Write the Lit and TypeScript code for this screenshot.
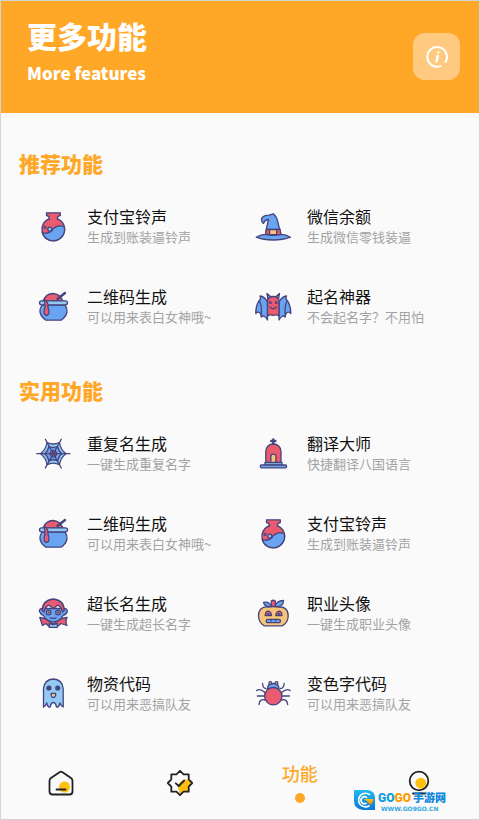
import { LitElement, html, css, svg } from "lit";
import { customElement } from "lit/decorators.js";

const potion = svg`
  <circle class="r" cx="18.3" cy="20.3" r="11.3"/>
  <path class="r" d="M14.5 10.5Q14.5 7 11.5 6.5V3.8H25.3V6.5Q22.2 7 22.2 10.5"/>
  <path class="b" d="M7.2 23.5Q13 25.5 16.5 22Q21 15 29.2 17.5A11.3 11.3 0 0 1 7.2 23.5Z"/>
  <path class="rn" d="M15.2 9.5H21.6V12H15.2Z"/>
  <circle class="l" cx="14.8" cy="20.2" r="2"/><circle class="l" cx="10" cy="18.3" r="1"/>`;
const cauldron = svg`
  <path class="b" d="M7 16Q4.5 20 5 23Q6 28 11 31.2H26Q31 28 32 23Q32.3 19 30 16Z"/>
  <path class="r" d="M8 12Q11 4.5 18 4.5Q25 5 28 12Z"/>
  <path class="o thick" d="M30 4L22.5 10"/>
  <rect class="l" x="4.5" y="11.8" width="28" height="4" rx="2"/>
  <path class="r" d="M9.5 10.5Q13.5 12.5 13 18Q15.5 26 11.5 26.5Q7.5 26 10 18Q10 15 9.5 10.5Z"/>`;
const hat = svg`
  <path class="b" d="M1.2 28.2Q6 25.5 10.5 25.3L11.5 19L13.5 10.5Q10 10.5 8.5 14.5Q5.8 12 6.8 9Q9 6.3 14 6.2L18.3 4.8Q22 8 22.8 13L25.8 25.3Q31 25.5 35.5 28.2Q28 31 18.3 31Q8 31 1.2 28.2Z"/>
  <path class="r" d="M11.4 20Q18 21.5 25 20L26 25.5Q18 27 10.6 25.5Z"/>
  <rect class="y" x="14.5" y="20.5" width="7.2" height="5.2"/>`;
const bat = svg`
  <path class="b" d="M12.5 13Q9.5 7.5 5 7Q6.5 10 3.5 12.5Q.5 18 .8 24.5Q3 22 5 24Q6 25 6.3 28Q9.2 25 12.5 31Z"/>
  <path class="b" d="M24 13Q27 7.5 31.5 7Q30 10 33 12.5Q36 18 35.8 24.5Q33.5 22 31.5 24Q30.5 25 30.2 28Q27.3 25 24 31Z"/>
  <path class="o" d="M4.5 12Q7 17 6.3 26M32 12Q29.5 17 30.2 26"/>
  <path class="b" d="M13 10.5L12 4.5L16 8ZM23.5 10.5L24.5 4.5L20.5 8Z"/>
  <path class="r" d="M12.5 27V12Q13 7.5 18.3 7.5Q23.5 7.5 24 12V27Q21.2 25 18.3 26.5Q15 25 12.5 27Z"/>
  <path class="o" d="M14.8 18Q18.3 21.5 21.5 18"/>
  <circle class="d" cx="15.4" cy="13.7" r="1.4"/><circle class="d" cx="21.2" cy="13.7" r="1.4"/>`;
const web = svg`
  <path class="l" d="M12 6.5Q18.3 9.5 24.5 6.5Q25.5 13.5 31 17.7Q25.5 21.5 24.5 28.7Q18.3 25.5 12 28.7Q11 21.5 5.5 17.7Q11 13.5 12 6.5Z"/>
  <path class="b" d="M14 10.5Q18.3 12.5 22.5 10.5Q23.5 15 26.8 17.7Q23.5 20.5 22.5 25Q18.3 22.5 14 25Q13 20.5 9.8 17.7Q13 15 14 10.5Z"/>
  <path class="r" d="M16.5 14.7H20L21.8 17.7L20 20.8H16.5L14.8 17.7Z"/>
  <path class="o" d="M1.8 17.7H34.8M10.3 3.2L26.3 32M26.3 3.2L10.3 32"/>`;
const tomb = svg`
  <path class="o thick" d="M18.3 3.5V8M16.3 5H20.3"/>
  <path class="r" d="M10.8 28.5V15.5Q11.5 8.2 18.3 8Q25.3 8.2 26 15.5V28.5Z"/>
  <path class="y" d="M15.8 26.7V20Q16 18.2 18.3 18.2Q20.7 18.2 20.9 20V26.7Z"/>
  <rect class="l" x="10" y="26.5" width="17" height="2.7"/>
  <rect class="b" x="5.3" y="29" width="26.3" height="2.8" rx="1.2"/>`;
const vampire = svg`
  <path class="r" d="M4.8 21.5L10 22.5L18.3 28L26.5 22.5L32 21.5Q30 26 32 29.5L26 27.5L23 30H13.5L11 27.5L7.5 29.5Z"/>
  <path class="b" d="M8 12.5Q3.7 12.5 4.5 15.5Q5.5 18.5 8.5 19.5Q11.5 25.5 18.3 26Q25 25.5 28 19.5Q31.5 18.5 32.3 15.5Q32.5 12.5 28.7 12.5Z"/>
  <path class="r" d="M7.3 14.5Q7 4.5 18.3 3Q29.5 4.5 29.2 14.5L27.5 16Q26.5 10.5 22.5 9.2L18.3 12.5L14 9.2Q10 10.5 9 16Z"/>
  <circle class="g" cx="13.6" cy="16.5" r="2.3"/><circle class="g" cx="23" cy="16.5" r="2.3"/>
  <circle class="d" cx="13.6" cy="16.5" r="1"/><circle class="d" cx="23" cy="16.5" r="1"/>
  <path class="o" d="M15.5 21.8Q18.3 23 21 21.8"/>
  <path class="l" d="M14.3 27.5L18.3 28.5L22.3 27.5V31.3H14.3Z"/>`;
const pumpkin = svg`
  <path class="y" d="M13 11Q3.5 10.5 3.5 20Q3.8 27 9.5 29.8H27Q33 27 33.2 20Q33 10.5 24 11Q18.3 9.5 13 11Z"/>
  <path class="b" d="M16.5 10.5Q10 11.5 8.5 6.5Q14 5 16.5 10.5ZM20 10.5Q21 5 28.5 4.5Q28.5 11.5 20 10.5Z"/>
  <path class="r" d="M16.3 10.5V5Q18.3 3.5 20.3 5V10.5Z"/>
  <path class="r" d="M10.2 19.5Q10.5 15.2 13.3 15.2Q16 15.5 16.5 19.5ZM20.8 19.5Q21.3 15.5 24 15.2Q27 15.5 27 19.5Z"/>
  <path class="d" d="M12.3 17.2H14.5V18.8H12.3ZM22.8 17.2H25V18.8H22.8Z"/>
  <rect class="b" x="11.3" y="23.3" width="14" height="3.3" rx="1.2"/>
  <path class="o" d="M16 23.3V25M20.6 23.3V25"/>`;
const ghost = svg`
  <path class="l" d="M8.5 31V12.5Q9.5 3.5 18.3 3Q27.3 3.5 28.2 12.5V31Q26 30 25 27Q23.5 32 21.5 31Q20.5 26.5 18.3 26.5Q16 26.5 15.3 31Q13 32 11.8 27Q10.5 30.5 8.5 31Z"/>
  <circle class="d" cx="14" cy="12" r="2.6"/><circle class="d" cx="22.7" cy="12" r="2.6"/>
  <path class="y" d="M16.2 17.3H20.6V19.5Q20 21.5 18.3 21.5Q16.5 21.5 16.2 19.5Z"/>`;
const spider = svg`
  <path class="o" d="M11 12.5Q8 12.5 7.5 7.5M25.5 12.5Q28.7 12.5 29.2 7.5M10 16.5Q5 12 1.5 14.5M26.7 16.5Q31.7 12 35.2 14.5M9 20H2.3M27.7 20H34.5M10 24Q4.5 22.5 4 28.5M26.7 24Q32 22.5 32.7 28.5"/>
  <path class="b" d="M12.5 13Q12.5 7.5 18.3 7.5Q24 7.5 24 13Z"/>
  <circle class="r" cx="18.3" cy="20.2" r="8.7"/>
  <circle class="y" cx="15.3" cy="7" r="1.4"/><circle class="y" cx="21.5" cy="7" r="1.4"/>`;

const sections = [
  {
    title: "推荐功能",
    items: [
      { icon: potion, name: "支付宝铃声", note: "生成到账装逼铃声" },
      { icon: hat, name: "微信余额", note: "生成微信零钱装逼" },
      { icon: cauldron, name: "二维码生成", note: "可以用来表白女神哦~" },
      { icon: bat, name: "起名神器", note: "不会起名字？不用怕" },
    ],
  },
  {
    title: "实用功能",
    items: [
      { icon: web, name: "重复名生成", note: "一键生成重复名字" },
      { icon: tomb, name: "翻译大师", note: "快捷翻译八国语言" },
      { icon: cauldron, name: "二维码生成", note: "可以用来表白女神哦~" },
      { icon: potion, name: "支付宝铃声", note: "生成到账装逼铃声" },
      { icon: vampire, name: "超长名生成", note: "一键生成超长名字" },
      { icon: pumpkin, name: "职业头像", note: "一键生成职业头像" },
      { icon: ghost, name: "物资代码", note: "可以用来恶搞队友" },
      { icon: spider, name: "变色字代码", note: "可以用来恶搞队友" },
    ],
  },
];

@customElement("app-root")
export class AppRoot extends LitElement {
  static styles = css`
    :host {
      display: flex;
      flex-direction: column;
      box-sizing: border-box;
      min-height: 100vh;
      border: 1px solid #d4d4d4;
      background: #fafafa;
      color: #111;
      font-family: "Noto Sans CJK SC", sans-serif;
    }
    h1, h2, p { margin: 0; }
    button {
      padding: 0;
      border: 0;
      background: none;
      color: inherit;
      font: inherit;
      text-align: left;
      cursor: pointer;
    }
    header {
      display: flex;
      justify-content: space-between;
      align-items: center;
      padding: 12px 19px 13px 26px;
      background: #ffa827;
      color: #fff;
    }
    .heading { padding-bottom: 11px; }
    h1 { font-size: 30px; line-height: 44px; font-weight: 900; }
    .subtitle {
      font-size: 17px;
      line-height: 32px;
      font-weight: 900;
    }
    .info {
      display: grid;
      place-items: center;
      width: 47px;
      height: 47px;
      border-radius: 12px;
      background: #ffca80;
    }
    main { flex: 1; padding: 34px 4px 0 18px; }
    section + section { margin-top: 45px; }
    h2 {
      color: #ffa827;
      font-size: 21px;
      line-height: 32px;
      font-weight: 900;
    }
    .grid {
      display: grid;
      grid-template-columns: 1fr 1fr;
      row-gap: 36px;
      padding: 26px 0 0 16px;
    }
    .item {
      display: flex;
      align-items: center;
      gap: 16px;
      height: 44px;
      white-space: nowrap;
    }
    .art { flex: none; width: 36px; height: 36px; overflow: visible; }
    .name, .note { display: block; }
    .name { font-size: 16px; line-height: 22px; }
    .note { padding-bottom: 2px; font-size: 13px; line-height: 20px; color: #a3a3a3; }
    .r, .b, .l, .y, .g, .o {
      stroke: #46447e;
      stroke-width: 1.3;
      stroke-linejoin: round;
      stroke-linecap: round;
    }
    .r, .rn { fill: #ea5b70; }
    .b { fill: #68a4f1; }
    .l { fill: #93c9f5; }
    .y { fill: #f8c477; }
    .g { fill: #b9a6a0; }
    .d { fill: #46447e; }
    .o { fill: none; }
    .thick { stroke-width: 2.4; }
    nav {
      position: relative;
      display: grid;
      grid-template-columns: repeat(4, 1fr);
      height: 72px;
    }
    .tab { display: grid; place-items: center; }
    .current {
      align-content: center;
      gap: 8px;
      padding-bottom: 2px;
      color: #ffa827;
      font-size: 18px;
      line-height: 24px;
      font-weight: 500;
    }
    .dot { width: 10px; height: 10px; border-radius: 50%; background: #ffa827; }
    .brand {
      position: absolute;
      right: 33px;
      bottom: 7px;
      width: 93px;
      height: 24px;
    }
    .brand-name { font: 900 12px "Roboto", sans-serif; }
    .brand-cn { font: 900 11px "Noto Sans CJK SC", sans-serif; }
    .brand-url { font: 700 6px "DejaVu Sans", sans-serif; }
  `;

  render() {
    return html`
      <header>
        <div class="heading">
          <h1>更多功能</h1>
          <p class="subtitle">More features</p>
        </div>
        <button class="info" aria-label="Info">
          <svg width="24" height="24" viewBox="0 0 24 24" fill="none" stroke="#fff" stroke-width="2" stroke-linecap="round">
            <path d="M15.5 21.1A9.8 9.8 0 1 1 20.5 17"/>
            <path d="M12.7 11L11.5 16.5M13.2 7.4V7.5" stroke-width="2.4"/>
          </svg>
        </button>
      </header>
      <main>
        ${sections.map((s) => html`
          <section>
            <h2>${s.title}</h2>
            <div class="grid">
              ${s.items.map((i) => html`
                <button class="item">
                  <svg class="art" viewBox="0 0 36 36" aria-hidden="true">${i.icon}</svg>
                  <span>
                    <span class="name">${i.name}</span>
                    <span class="note">${i.note}</span>
                  </span>
                </button>`)}
            </div>
          </section>`)}
      </main>
      <nav>
        <button class="tab" aria-label="Home">
          <svg width="28" height="28" viewBox="0 0 28 28" fill="none" stroke="#222" stroke-width="1.8" stroke-linecap="round" stroke-linejoin="round">
            <circle cx="17.5" cy="18" r="5.5" fill="#ffc010" stroke="none"/>
            <path d="M12.5 3.2Q14 2.2 15.5 3.2L24 9Q25.5 10 25.5 12V22.5Q25.5 25.5 22.5 25.5H5.5Q2.5 25.5 2.5 22.5V12Q2.5 10 4 9ZM9.5 20.5H18.5"/>
          </svg>
        </button>
        <button class="tab" aria-label="Verified">
          <svg width="28" height="28" viewBox="0 0 28 28" fill="none" stroke="#222" stroke-width="1.8" stroke-linecap="round" stroke-linejoin="round">
            <path d="M12 18Q13 11 20 10.5L23.5 11L25 14L22.5 17.5V22.5H17.5L14 25.5Z" fill="#ffc010" stroke="none"/>
            <path d="M14 1.8L17.6 5.3H22.7V10.4L26.2 14L22.7 17.6V22.7H17.6L14 26.2L10.4 22.7H5.3V17.6L1.8 14L5.3 10.4V5.3H10.4ZM9.8 14.3L12.8 17L18.2 11.5"/>
          </svg>
        </button>
        <button class="tab current" aria-current="page">功能<span class="dot"></span></button>
        <button class="tab" aria-label="Profile">
          <svg width="28" height="28" viewBox="0 0 28 28" fill="none" stroke="#222" stroke-width="1.8" stroke-linecap="round">
            <circle cx="15.8" cy="14.2" r="5.5" fill="#ffc010" stroke="none"/>
            <circle cx="14" cy="12" r="9.3"/>
            <path d="M8 24.5H20"/>
          </svg>
        </button>
        <svg class="brand" viewBox="0 0 93 24" role="img" aria-label="GOGO手游网">
          <defs>
            <linearGradient id="blue" x2="0" y2="1"><stop stop-color="#25b8ee"/><stop offset="1" stop-color="#0a79d6"/></linearGradient>
            <linearGradient id="gold" x2="0" y2="1"><stop stop-color="#ffc400"/><stop offset="1" stop-color="#ff7e00"/></linearGradient>
          </defs>
          <path fill="url(#blue)" d="M1 2H15Q22 3 22 10V22H10Q1 21 1 13Z"/>
          <path fill="none" stroke="#fff" stroke-width="1.6" d="M17 7A6.8 6.8 0 1 0 16.5 17.5M14 10A3.4 3.4 0 1 0 13.5 15"/>
          <path fill="url(#gold)" d="M11 11H20.5Q20 15 17 17L15 14Z"/>
          <text class="brand-name" x="25" y="14" fill="#129ae2">GO<tspan fill="#ff9c00">GO</tspan></text>
          <text class="brand-cn" x="60" y="14" fill="#0e86dc">手游网</text>
          <text class="brand-url" x="28" y="23" fill="#35a7e5">WWW.GO9GO.CN</text>
        </svg>
      </nav>
    `;
  }
}
